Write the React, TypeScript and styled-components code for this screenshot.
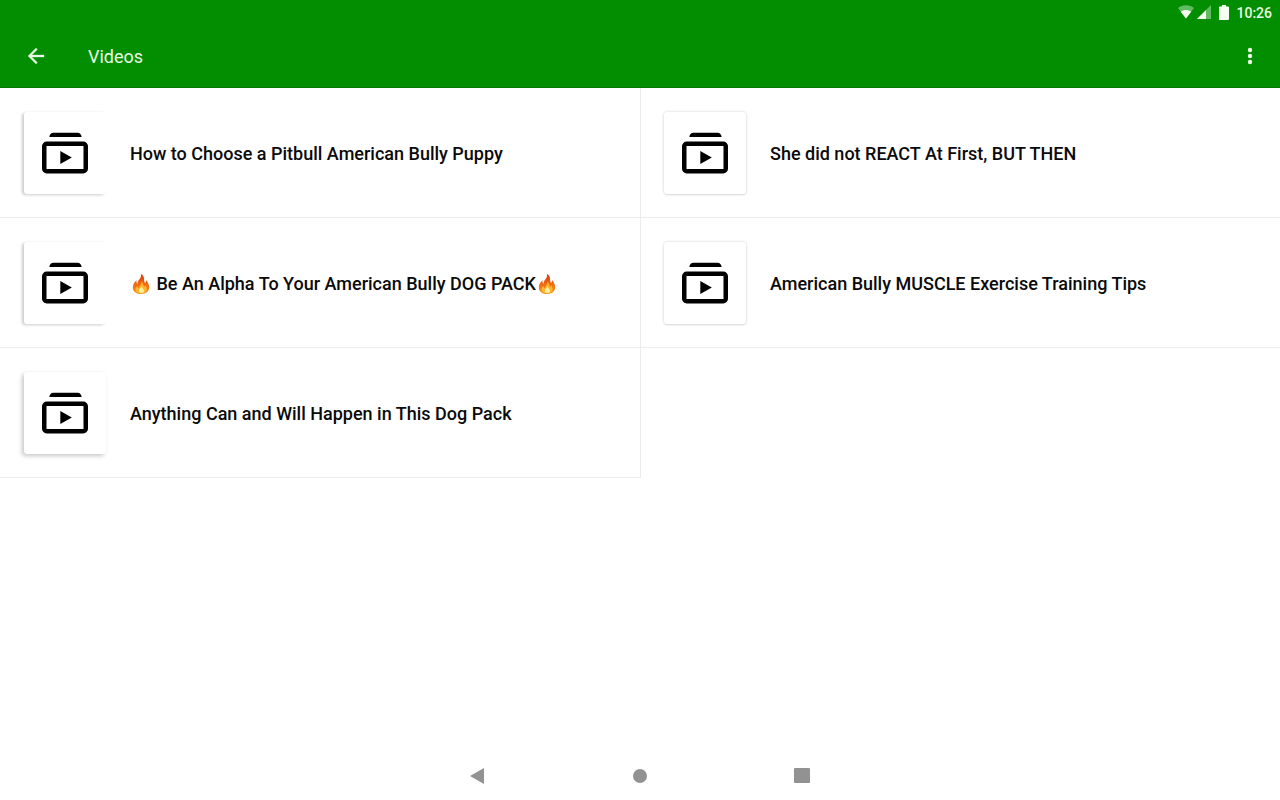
import React from "react";
import styled, { createGlobalStyle } from "styled-components";

const GlobalStyle = createGlobalStyle`
  * { box-sizing: border-box; }
  body { margin: 0; background: #fff; font-family: Roboto, "Liberation Sans", sans-serif; color: #0a0a0a; }
  svg { display: block; }
`;

const Page = styled.div`
  min-height: 100vh;
  display: flex;
  flex-direction: column;
`;

const Header = styled.header`
  background: #028e00;
  color: #e8fbe4;
  border-bottom: 1px solid #047a03;
`;

const StatusBar = styled.div`
  height: 24px;
  display: flex;
  align-items: center;
  justify-content: flex-end;
  padding: 1px 8px 0 0;
`;

const StatusIcons = styled.svg`
  margin-right: 4px;
`;

const Clock = styled.time`
  font-size: 14px;
  line-height: 24px;
  font-weight: 500;
`;

const AppBar = styled.div`
  height: 63px;
  display: flex;
  align-items: center;
  padding: 1px 6px 0 12px;
`;

const IconButton = styled.button`
  width: 48px;
  height: 48px;
  padding: 0;
  border: 0;
  background: none;
  color: inherit;
  display: flex;
  align-items: center;
  justify-content: center;
  cursor: pointer;
`;

const Title = styled.h1`
  flex: 1;
  margin: 0 0 0 28px;
  padding-top: 2px;
  font-size: 18px;
  line-height: 24px;
  font-weight: 400;
`;

const Main = styled.main`
  flex: 1;
`;

const VideoGrid = styled.ul`
  list-style: none;
  margin: 0;
  padding: 0;
  display: grid;
  grid-template-columns: 1fr 1fr;
`;

const VideoCell = styled.li`
  border-bottom: 1px solid #ececec;
  &:nth-child(odd) { box-shadow: 1px 0 0 #ececec; }
`;

const VideoLink = styled.a`
  display: flex;
  align-items: center;
  gap: 24px;
  padding: 24px 24px 23px;
  color: inherit;
  text-decoration: none;
`;

const shadows = {
  flat: "0 0 3px rgba(0, 0, 0, 0.18), 0 1px 2px rgba(0, 0, 0, 0.08)",
  side: "-2px 1px 3px rgba(0, 0, 0, 0.2)",
  deep: "-2px 2px 4px rgba(0, 0, 0, 0.22)",
};

const Thumb = styled.span<{ $shadow: keyof typeof shadows }>`
  flex: none;
  width: 82px;
  height: 82px;
  display: flex;
  align-items: center;
  justify-content: center;
  background: #fff;
  border-radius: 3px;
  box-shadow: ${(p) => shadows[p.$shadow]};
`;

const VideoTitle = styled.span`
  padding-top: 2px;
  font-size: 18px;
  line-height: 24px;
  font-weight: 500;
`;

const Flame = styled.svg`
  display: inline-block;
  vertical-align: -4px;
  margin: 0 1px;
`;

const NavBar = styled.nav`
  height: 48px;
  display: flex;
  align-items: center;
  justify-content: center;
  gap: 114px;
  color: #929292;
`;

const Fire = () => (
  <Flame width="20" height="20" viewBox="0 0 20 20" role="img" aria-label="🔥">
    <defs>
      <linearGradient id="flame" x1="0" y1="0" x2="0" y2="1">
        <stop offset="0" stopColor="#d9360f" />
        <stop offset=".5" stopColor="#f06a12" />
        <stop offset="1" stopColor="#f7941d" />
      </linearGradient>
    </defs>
    <path fill="url(#flame)" d="M9.8 0C10.3 2 10 3.400 8.600 5.100C7.300 6.700 6.400 8 6.500 10C5.600 9.200 5.200 7.800 5.500 6.300C3.600 8 1.800 10.500 1.800 13.400C1.800 17.400 5.300 20 10 20C14.700 20 18.200 17.400 18.200 13.300C18.200 10.200 16.400 8.700 15.800 6.200C14.900 7 14.500 7.900 14.500 9.300C13.300 8.200 13 6.900 13.100 5.200C13.200 2.800 11.900 .8 9.800 0Z" />
    <path fill="#fdb62f" d="M10.300 7.300C10.900 9.300 9.900 10.600 8.900 11.900C8.200 12.800 7.800 13.600 7.900 14.400C6.900 13.900 6.400 13 6.300 12C5.200 13 4.500 14.200 4.500 15.500C4.500 18 6.900 19.400 10 19.400C13.200 19.400 15.700 18 15.700 15.200C15.700 13.500 14.900 12.300 14.600 11.200C14 11.700 13.700 12.300 13.500 13C12.200 12 12.500 9 10.300 7.300Z" />
    <path fill="#fff0a0" d="M10.300 12.300C10.400 14 8.300 14.600 7.900 16.500C7.600 18.200 8.700 19 10.200 19C12 19 13.200 18 12.900 16.300C12.600 14.700 11 14.200 10.300 12.300Z" />
  </Flame>
);

const SubscriptionsIcon = () => (
  <svg width="82" height="82" viewBox="0 0 82 82" aria-hidden="true">
    <path d="M25.300 25C25.600 22.300 27 20.700 29.500 20.700H53.500C56 20.700 57.200 22.300 57.700 25Z" />
    <rect x="20.250" y="31.750" width="41.500" height="27.500" rx="2.500" fill="none" stroke="#000" strokeWidth="4.500" />
    <path d="M36.300 39V52L47.800 45.500Z" />
  </svg>
);

type Video = { title: React.ReactNode; shadow: keyof typeof shadows };

const videos: Video[] = [
  { title: "How to Choose a Pitbull American Bully Puppy", shadow: "side" },
  { title: "She did not REACT At First, BUT THEN", shadow: "flat" },
  { title: <><Fire /> Be An Alpha To Your American Bully DOG PACK<Fire /></>, shadow: "side" },
  { title: "American Bully MUSCLE Exercise Training Tips", shadow: "flat" },
  { title: "Anything Can and Will Happen in This Dog Pack", shadow: "deep" },
];

export default function App() {
  return (
    <Page>
      <GlobalStyle />
      <Header>
        <StatusBar>
          <StatusIcons width="54" height="16" viewBox="0 0 54 16" fill="#f4fff2" aria-hidden="true">
            <path opacity=".4" d="M0 3C4.500 -.6 11.500 -.6 16 3L8 13.500Z" />
            <path d="M2.800 6.800C6 4.500 10 4.500 13.200 6.800L8 13.500Z" />
            <path opacity=".4" d="M19 14L33 0V14Z" />
            <path d="M19 14L28 5V14Z" />
            <path d="M44 0H48V1.500H50Q51 1.500 51 2.500V14Q51 15 50 15H42Q41 15 41 14V2.500Q41 1.500 42 1.500H44Z" />
          </StatusIcons>
          <Clock>10:26</Clock>
        </StatusBar>
        <AppBar>
          <IconButton aria-label="Back">
            <svg width="24" height="24" viewBox="0 0 24 24" fill="currentColor" stroke="currentColor" strokeWidth=".3" aria-hidden="true">
              <path d="M20 11H7.830l5.590-5.590L12 4l-8 8 8 8 1.410-1.410L7.830 13H20z" />
            </svg>
          </IconButton>
          <Title>Videos</Title>
          <IconButton aria-label="More options">
            <svg width="24" height="24" viewBox="0 0 24 24" fill="currentColor" aria-hidden="true">
              <circle cx="12" cy="6" r="2.200" />
              <circle cx="12" cy="12" r="2.200" />
              <circle cx="12" cy="18" r="2.200" />
            </svg>
          </IconButton>
        </AppBar>
      </Header>
      <Main>
        <VideoGrid>
          {videos.map((video, i) => (
            <VideoCell key={i}>
              <VideoLink href="#">
                <Thumb $shadow={video.shadow}>
                  <SubscriptionsIcon />
                </Thumb>
                <VideoTitle>{video.title}</VideoTitle>
              </VideoLink>
            </VideoCell>
          ))}
        </VideoGrid>
      </Main>
      <NavBar aria-label="System">
        <IconButton aria-label="Back">
          <svg width="18" height="18" viewBox="0 0 18 18" fill="currentColor" aria-hidden="true">
            <path d="M15 1V17L1 9Z" />
          </svg>
        </IconButton>
        <IconButton aria-label="Home">
          <svg width="18" height="18" viewBox="0 0 18 18" fill="currentColor" aria-hidden="true">
            <circle cx="9" cy="9" r="7" />
          </svg>
        </IconButton>
        <IconButton aria-label="Recent apps">
          <svg width="18" height="18" viewBox="0 0 18 18" fill="currentColor" aria-hidden="true">
            <rect x="1" y="1" width="16" height="15" rx="1" />
          </svg>
        </IconButton>
      </NavBar>
    </Page>
  );
}
